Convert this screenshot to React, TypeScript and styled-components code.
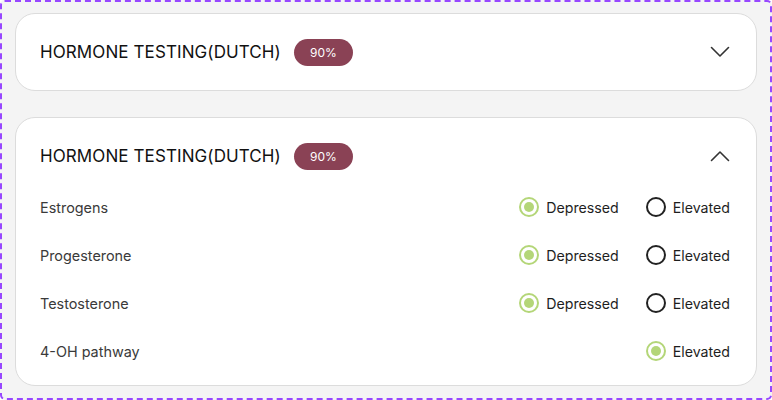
import React from "react";
import styled, { createGlobalStyle } from "styled-components";

const Global = createGlobalStyle`
  html, body { margin: 0; padding: 0; background: #ffffff; }
  body { font-family: Inter, "Noto Sans", sans-serif; }
  * { box-sizing: border-box; }
`;

const Frame = styled.div`
  width: 772px;
  height: 400px;
  background: #f4f4f4;
  border: 2px dashed #9747ff;
  border-radius: 5px;
  padding: 11px 13px;
  display: flex;
  flex-direction: column;
  gap: 26px;
`;

const Card = styled.section`
  background: #ffffff;
  border: 1px solid #dcdcdc;
  border-radius: 20px;
  padding: 0 26px 0 24px;
  display: flex;
  flex-direction: column;
`;

const Header = styled.div`
  height: 76px;
  display: flex;
  align-items: center;
  justify-content: space-between;
`;

const TitleGroup = styled.div`
  display: flex;
  align-items: center;
  gap: 13px;
`;

const Title = styled.h2`
  margin: 0;
  font-size: 17px;
  font-weight: 400;
  color: #111111;
  letter-spacing: 0.1px;
`;

const Badge = styled.span`
  display: inline-flex;
  align-items: center;
  justify-content: center;
  width: 59px;
  height: 27px;
  border-radius: 14px;
  background: #8a4255;
  color: #ffffff;
  font-size: 12px;
`;

const ToggleButton = styled.button`
  border: 0;
  background: transparent;
  padding: 0;
  width: 20px;
  height: 12px;
  display: flex;
  align-items: center;
  justify-content: center;
  cursor: pointer;
`;

const Body = styled.div`
  display: flex;
  flex-direction: column;
  gap: 24px;
  padding: 1px 0 22px;
`;

const Row = styled.div`
  height: 24px;
  display: flex;
  align-items: center;
  justify-content: space-between;
`;

const Label = styled.span`
  font-size: 14.4px;
  color: #3a3a3a;
`;

const Options = styled.div`
  display: flex;
  align-items: center;
  gap: 27px;
`;

const Option = styled.label`
  display: flex;
  align-items: center;
  gap: 7px;
  font-size: 14.2px;
  color: #1e1e1e;
  cursor: pointer;
`;

const Dot = styled.span<{ $checked: boolean }>`
  width: 20px;
  height: 20px;
  border-radius: 50%;
  border: 2px solid ${(p) => (p.$checked ? "#b4d678" : "#222222")};
  display: flex;
  align-items: center;
  justify-content: center;
  &::after {
    content: "";
    width: 10px;
    height: 10px;
    border-radius: 50%;
    background: ${(p) => (p.$checked ? "#b4d678" : "transparent")};
  }
`;

const Chevron = ({ up }: { up?: boolean }) => (
  <svg width="20" height="12" viewBox="0 0 20 12" fill="none">
    <polyline
      points={up ? "1.5,10.5 10,2 18.5,10.5" : "1.5,1.5 10,10 18.5,1.5"}
      stroke="#333333"
      strokeWidth="1.6"
      strokeLinecap="round"
      strokeLinejoin="round"
    />
  </svg>
);

type Item = { name: string; options: { label: string; checked: boolean }[] };

const items: Item[] = [
  { name: "Estrogens", options: [{ label: "Depressed", checked: true }, { label: "Elevated", checked: false }] },
  { name: "Progesterone", options: [{ label: "Depressed", checked: true }, { label: "Elevated", checked: false }] },
  { name: "Testosterone", options: [{ label: "Depressed", checked: true }, { label: "Elevated", checked: false }] },
  { name: "4-OH pathway", options: [{ label: "Elevated", checked: true }] },
];

const SectionHeader = ({ open }: { open: boolean }) => (
  <Header>
    <TitleGroup>
      <Title>HORMONE TESTING(DUTCH)</Title>
      <Badge>90%</Badge>
    </TitleGroup>
    <ToggleButton aria-label={open ? "Collapse" : "Expand"}>
      <Chevron up={open} />
    </ToggleButton>
  </Header>
);

export default function App() {
  return (
    <>
      <Global />
      <Frame>
        <Card>
          <SectionHeader open={false} />
        </Card>
        <Card>
          <SectionHeader open={true} />
          <Body>
            {items.map((it) => (
              <Row key={it.name}>
                <Label>{it.name}</Label>
                <Options>
                  {it.options.map((o) => (
                    <Option key={o.label}>
                      <Dot $checked={o.checked} />
                      {o.label}
                    </Option>
                  ))}
                </Options>
              </Row>
            ))}
          </Body>
        </Card>
      </Frame>
    </>
  );
}
